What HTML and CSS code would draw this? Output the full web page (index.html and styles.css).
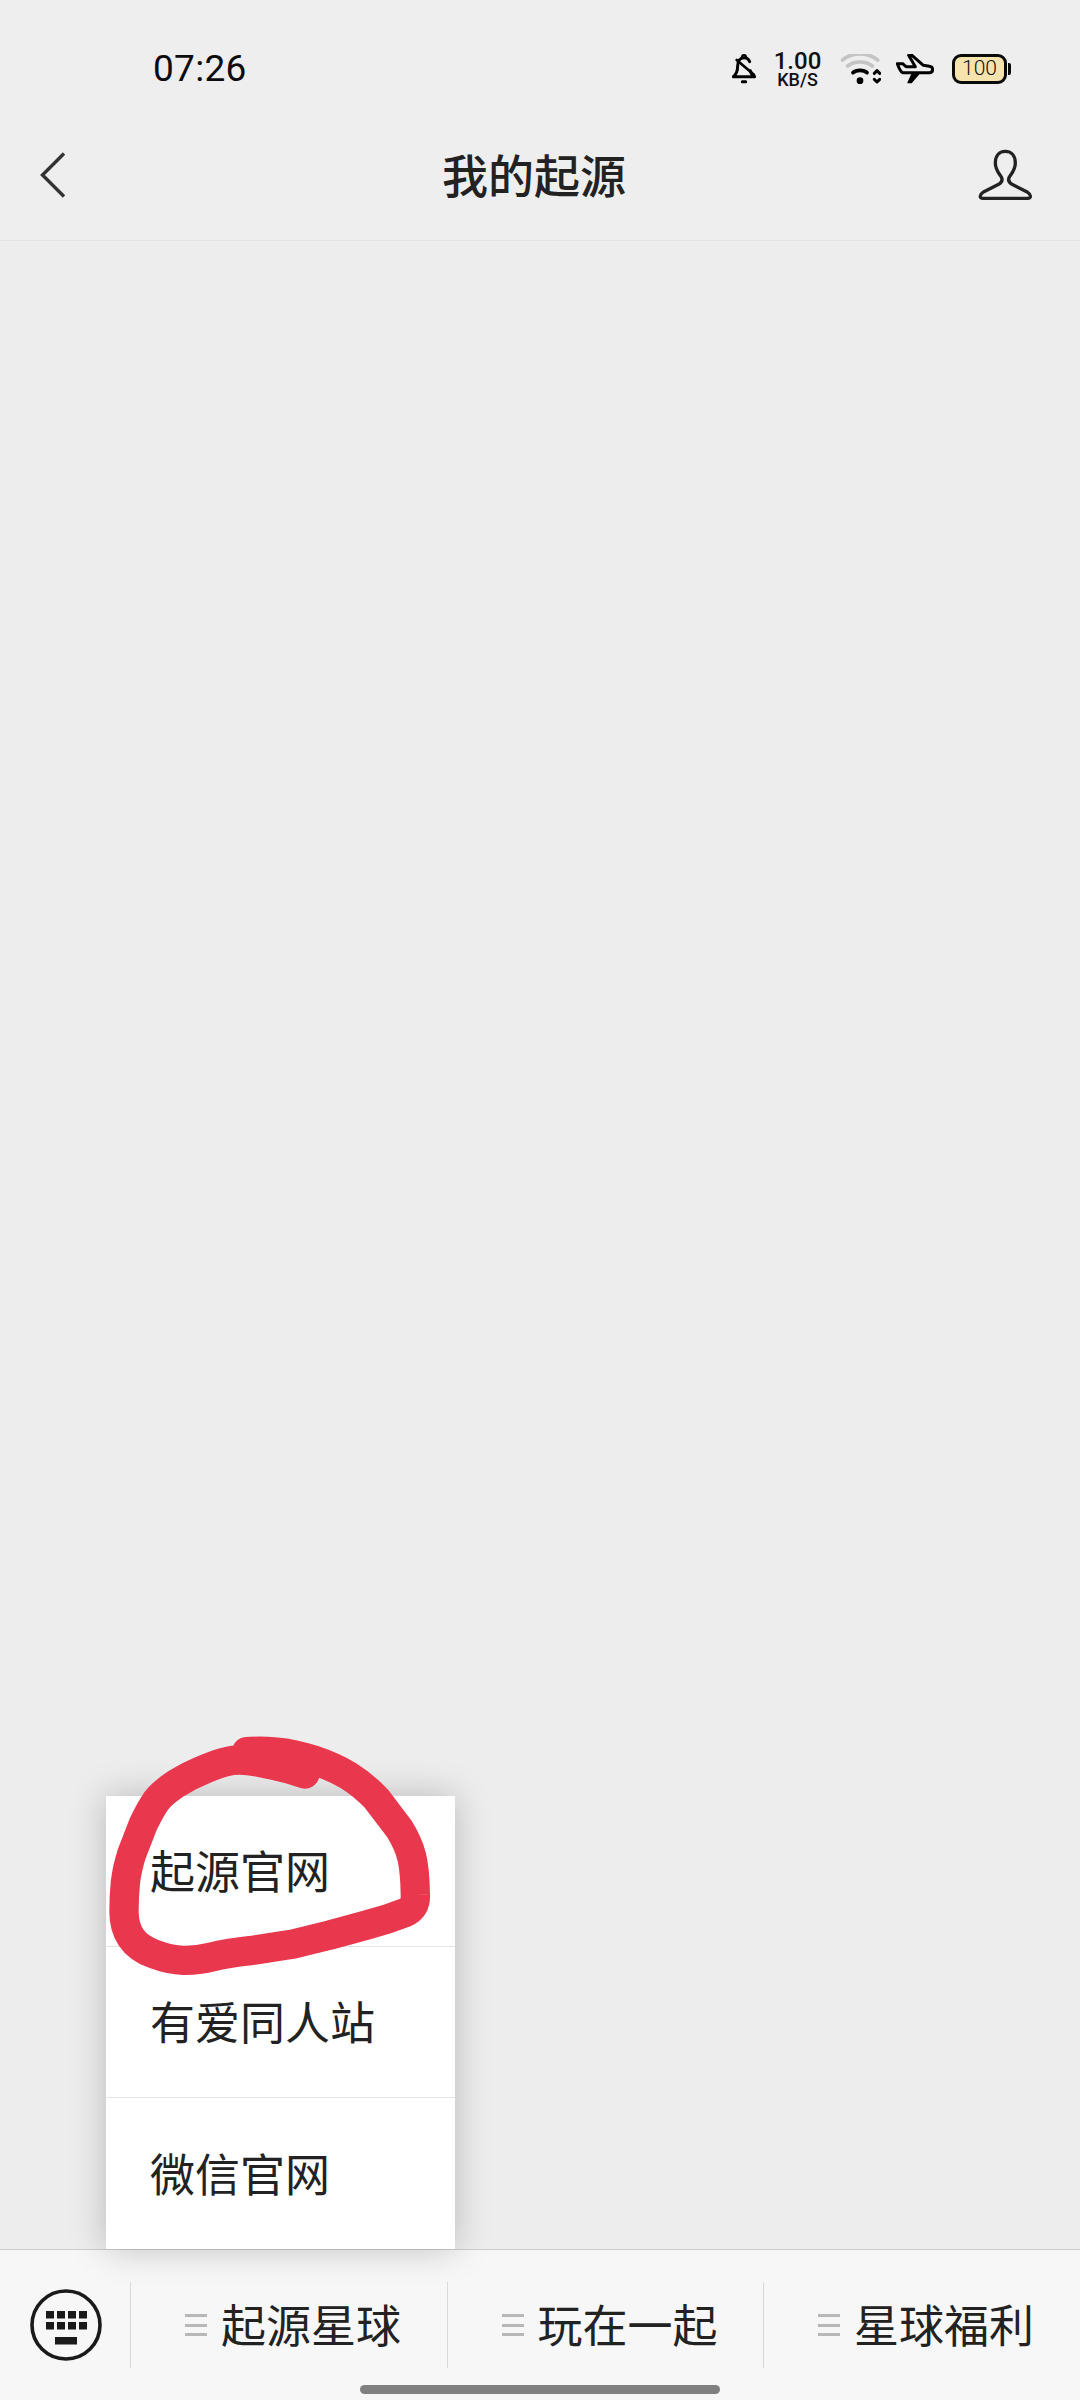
FILE: index.html
```html
<!DOCTYPE html>
<html lang="zh-CN">
<head>
<meta charset="utf-8">
<title>我的起源</title>
<link rel="stylesheet" href="styles.css">
</head>
<body>
<div class="screen">
  <header class="top">
    <div class="status">
      <span class="time">07:26</span>
      <div class="status-icons">
        <svg class="ic-bell" viewBox="0 0 72 90" fill="none" stroke="#000" stroke-width="9" stroke-linecap="round" stroke-linejoin="round">
          <path d="M4 68H68M4 68C16 58 17 48 17 36C17 20 25 11 36 11C44 11 50 15 53 23M55 50C56 58 60 63 68 68"/>
          <path d="M30 8C31 2 41 2 42 8" stroke-width="7"/>
          <path d="M14 18L66 62" stroke-width="8"/>
          <path d="M31 83H41" stroke-width="9"/>
        </svg>
        <div class="speed"><span class="speed-num">1.00</span><span class="speed-unit">KB/S</span></div>
        <svg class="ic-wifi" viewBox="0 0 120 90" fill="none" stroke-linecap="round">
          <path d="M4 18C34 -6 80 -6 110 18" stroke="#c4c4c4" stroke-width="11"/>
          <path d="M20 36C40 20 74 20 94 36" stroke="#c4c4c4" stroke-width="11"/>
          <path d="M36 56C46 47 68 47 78 56" stroke="#000" stroke-width="11"/>
          <circle cx="57" cy="80" r="10" fill="#000"/>
          <path d="M100 58L108 50L116 58M100 76L108 84L116 76" stroke="#000" stroke-width="9" stroke-linejoin="round"/>
        </svg>
        <svg class="ic-plane" viewBox="0 0 114 90" fill="none" stroke="#000" stroke-width="9" stroke-linejoin="round" stroke-linecap="round">
          <path d="M4 29H20L30 38H58L38 4H48L82 34L100 37C113 39 113 55 100 56H20C12 52 8 40 4 29Z"/>
          <path d="M48 60H68L46 86H36Z" fill="#000" stroke-width="4"/>
        </svg>
        <div class="battery">
          <div class="battery-body">100</div>
          <div class="battery-tip"></div>
        </div>
      </div>
    </div>
    <nav class="navbar">
      <svg class="ic-back" viewBox="0 0 26 46" fill="none" stroke="#333" stroke-width="3.4">
        <path d="M24 1.5L2.5 23L24 44.5"/>
      </svg>
      <h1 class="title">我的起源</h1>
      <svg class="ic-person" viewBox="830 355 170 160" fill="none" stroke="#222" stroke-width="10" stroke-linejoin="round">
        <path d="M915 365C895 365 885 380 885 400C885 420 895 430 903 442C908 452 905 458 895 464L848 488C838 494 836 506 848 506H982C994 506 992 494 982 488L935 464C925 458 922 452 927 442C935 430 945 420 945 400C945 380 935 365 915 365Z"/>
      </svg>
    </nav>
  </header>

  <main class="content">
    <div class="menu">
      <div class="menu-item">起源官网</div>
      <div class="menu-item">有爱同人站</div>
      <div class="menu-item">微信官网</div>
      <svg class="scribble" viewBox="0 0 1200 900" fill="none" stroke="#e9374e" stroke-width="88" stroke-linecap="round" stroke-linejoin="round">
        <path d="M675 192L627 177Q580 165 535 156Q490 148 460 151Q430 155 380 175Q330 195 287 222Q245 250 227 275Q210 300 190 342L155 432Q140 480 136 520Q132 560 132 605Q132 650 153 682Q175 715 222 732Q270 750 310 751Q350 752 395 741Q440 730 510 722L640 702L750 675L860 645Q920 630 975 608Q1008 594 1006 555Q1005 480 995 440Q985 400 957 355L890 267Q850 225 805 197Q760 170 700 150Q640 130 590 126Q540 122 500 125"/>
      </svg>
    </div>
  </main>

  <footer class="bar">
    <div class="kbd-cell">
      <svg class="ic-kbd" viewBox="0 0 72 72">
        <circle cx="36" cy="36" r="34" fill="none" stroke="#1a1a1a" stroke-width="3.6"/>
        <g fill="#1a1a1a">
          <rect x="16" y="22" width="8" height="7.5"/><rect x="27" y="22" width="8" height="7.5"/><rect x="38" y="22" width="8" height="7.5"/><rect x="49" y="22" width="8" height="7.5"/>
          <rect x="16" y="33" width="8" height="7.5"/><rect x="27" y="33" width="8" height="7.5"/><rect x="38" y="33" width="8" height="7.5"/><rect x="49" y="33" width="8" height="7.5"/>
          <rect x="25" y="48" width="22" height="7.5"/>
        </g>
      </svg>
    </div>
    <div class="tab"><span class="lines"></span><span class="tab-label">起源星球</span></div>
    <div class="tab"><span class="lines"></span><span class="tab-label">玩在一起</span></div>
    <div class="tab"><span class="lines"></span><span class="tab-label">星球福利</span></div>
    <div class="home-pill"></div>
  </footer>
</div>
</body>
</html>
```

FILE: styles.css
```css
* {
  box-sizing: border-box;
}

html,
body {
  margin: 0;
  padding: 0;
}

body {
  background: #ededed;
  color: #222;
  font-family: "Noto Sans CJK SC", "Noto Sans", sans-serif;
}

.screen {
  width: 1080px;
  height: 2400px;
  display: flex;
  flex-direction: column;
  overflow: hidden;
  position: relative;
  background: #ededed;
}

.top {
  height: 241px;
  flex: none;
  background: #eeeeee;
  border-bottom: 1px solid #e4e4e4;
}

.status {
  height: 110px;
  padding: 40px 0 12px 153px;
  display: flex;
  align-items: center;
}

.time {
  font-family: Roboto, sans-serif;
  font-size: 37px;
  line-height: 58px;
  color: #0c0c0c;
  letter-spacing: 0.3px;
}

.status-icons {
  margin-left: auto;
  padding-right: 69px;
  display: flex;
  align-items: center;
}

.ic-bell {
  width: 24px;
  height: 30px;
  margin-right: 18px;
}

.speed {
  width: 47px;
  display: flex;
  flex-direction: column;
  align-items: center;
  font-family: Roboto, sans-serif;
  font-weight: 500;
  color: #111;
}

.speed-num {
  font-size: 24px;
  line-height: 21px;
}

.speed-unit {
  font-size: 18px;
  line-height: 15px;
}

.ic-wifi {
  width: 40px;
  height: 30px;
  margin-left: 20px;
  margin-right: 15px;
}

.ic-plane {
  width: 38px;
  height: 30px;
  margin-right: 18px;
}

.battery {
  display: flex;
  align-items: center;
  gap: 1px;
}

.battery-body {
  width: 55px;
  height: 30px;
  border: 3.4px solid #0a0a0a;
  border-radius: 9px;
  background: #f7e3ae;
  font-family: Roboto, sans-serif;
  font-weight: 300;
  font-size: 21px;
  line-height: 23px;
  text-align: center;
  color: #111;
}

.battery-tip {
  width: 3px;
  height: 12px;
  background: #0a0a0a;
  border-radius: 0 2px 2px 0;
}

.navbar {
  height: 130px;
  padding: 0 46px 0 34px;
  display: grid;
  grid-template-columns: 1fr auto 1fr;
  align-items: center;
}

.ic-back {
  width: 26px;
  height: 46px;
  margin-left: 6px;
}

.title {
  margin: 0 0 5px;
  font-size: 46px;
  font-weight: 500;
  line-height: 60px;
  color: #222;
}

.ic-person {
  width: 56.67px;
  height: 53.33px;
  justify-self: end;
}

.content {
  flex: 1;
  position: relative;
}

.menu {
  position: absolute;
  left: 106px;
  bottom: 0;
  width: 349px;
  background: #fff;
  box-shadow: 0 0 34px rgba(0, 0, 0, 0.22);
  z-index: 2;
}

.menu-item {
  height: 151px;
  padding: 0 0 3px 44px;
  display: flex;
  align-items: center;
  font-size: 45px;
  color: #222;
  border-bottom: 1px solid #e4e4e4;
}

.menu-item:last-of-type {
  border-bottom: 0;
}

.scribble {
  position: absolute;
  left: -26px;
  top: -86px;
  width: 400px;
  height: 300px;
  pointer-events: none;
}

.bar {
  height: 151px;
  flex: none;
  position: relative;
  padding-top: 32px;
  display: flex;
  align-items: flex-start;
  background: #f7f7f7;
  border-top: 1px solid #cccccc;
}

.kbd-cell {
  width: 130px;
  height: 86px;
  padding: 7px 0 0 30px;
  flex: none;
}

.ic-kbd {
  display: block;
  width: 72px;
  height: 72px;
}

.tab {
  width: 316.5px;
  height: 86px;
  flex: none;
  padding-left: 54px;
  display: flex;
  align-items: center;
  gap: 14px;
  border-left: 1px solid #d9d9d9;
}

.lines {
  position: relative;
  width: 22px;
  height: 22px;
  border-top: 3px solid #b8b8b8;
  border-bottom: 3px solid #b8b8b8;
}

.lines::after {
  content: "";
  position: absolute;
  left: 0;
  right: 0;
  top: 6.5px;
  height: 3px;
  background: #b8b8b8;
}

.tab-label {
  font-size: 45px;
  line-height: 60px;
  margin-bottom: 2px;
  color: #222;
}

.home-pill {
  position: absolute;
  left: 360px;
  top: 135px;
  width: 360px;
  height: 9px;
  border-radius: 5px;
  background: #808080;
}
```
